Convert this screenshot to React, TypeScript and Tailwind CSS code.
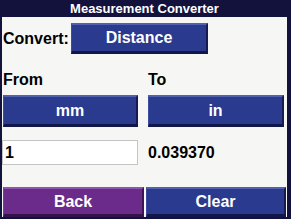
import React from 'react';

const blueBtn =
  'flex items-center justify-center bg-[#2a3a8e] border-t-2 border-t-[#5261ae] border-l border-l-[#3c4ca0] border-r-2 border-r-[#161c52] border-b-[3px] border-b-[#12174a] text-white font-bold text-[16px] leading-none';
const purpleBtn =
  'flex items-center justify-center bg-[#6a2b8b] border-t-2 border-t-[#8d55ad] border-l border-l-[#7a3a9a] border-r-2 border-r-[#3c1552] border-b-[3px] border-b-[#35124a] text-white font-bold text-[16px] leading-none';

export default function App() {
  return (
    <div
      className="w-[291px] h-[219px] bg-[#12123c] flex flex-col pl-[2px] pr-[4px] pb-[2px] overflow-hidden"
      style={{ fontFamily: '"Liberation Sans", Arial, sans-serif' }}
    >
      <div className="h-[17px] flex items-center justify-center text-white font-bold text-[13px] leading-none">
        Measurement Converter
      </div>

      <div className="flex-1 bg-[#f6f6f4] flex flex-col text-black">
        <div className="flex items-center mt-[6px] h-[31px]">
          <span className="ml-[1px] w-[68px] font-bold text-[16px] leading-none">Convert:</span>
          <button type="button" className={`${blueBtn} w-[137px] h-[31px]`}>Distance</button>
        </div>

        <div className="flex mt-[16px] h-[18px] items-end font-bold text-[16px] leading-none">
          <span className="ml-[1px] w-[145px]">From</span>
          <span>To</span>
        </div>

        <div className="flex mt-[7px] gap-[10px] pl-[1px]">
          <button type="button" className={`${blueBtn} w-[135px] h-[32px]`}>mm</button>
          <button type="button" className={`${blueBtn} w-[136px] h-[32px]`}>in</button>
        </div>

        <div className="flex items-center mt-[13px] h-[25px]">
          <div className="w-[136px] h-[25px] bg-white border border-[#c4c4c4] flex items-center pl-[2px] font-bold text-[16px] leading-none">
            1
          </div>
          <span className="ml-[10px] font-bold text-[16px] leading-none">0.039370</span>
        </div>

        <div className="flex-1" />

        <div className="flex gap-[2px] pl-[1px] pr-[1px]">
          <button type="button" className={`${purpleBtn} w-[141px] h-[30px]`}>Back</button>
          <button type="button" className={`${blueBtn} flex-1 h-[30px]`}>Clear</button>
        </div>
      </div>
    </div>
  );
}
